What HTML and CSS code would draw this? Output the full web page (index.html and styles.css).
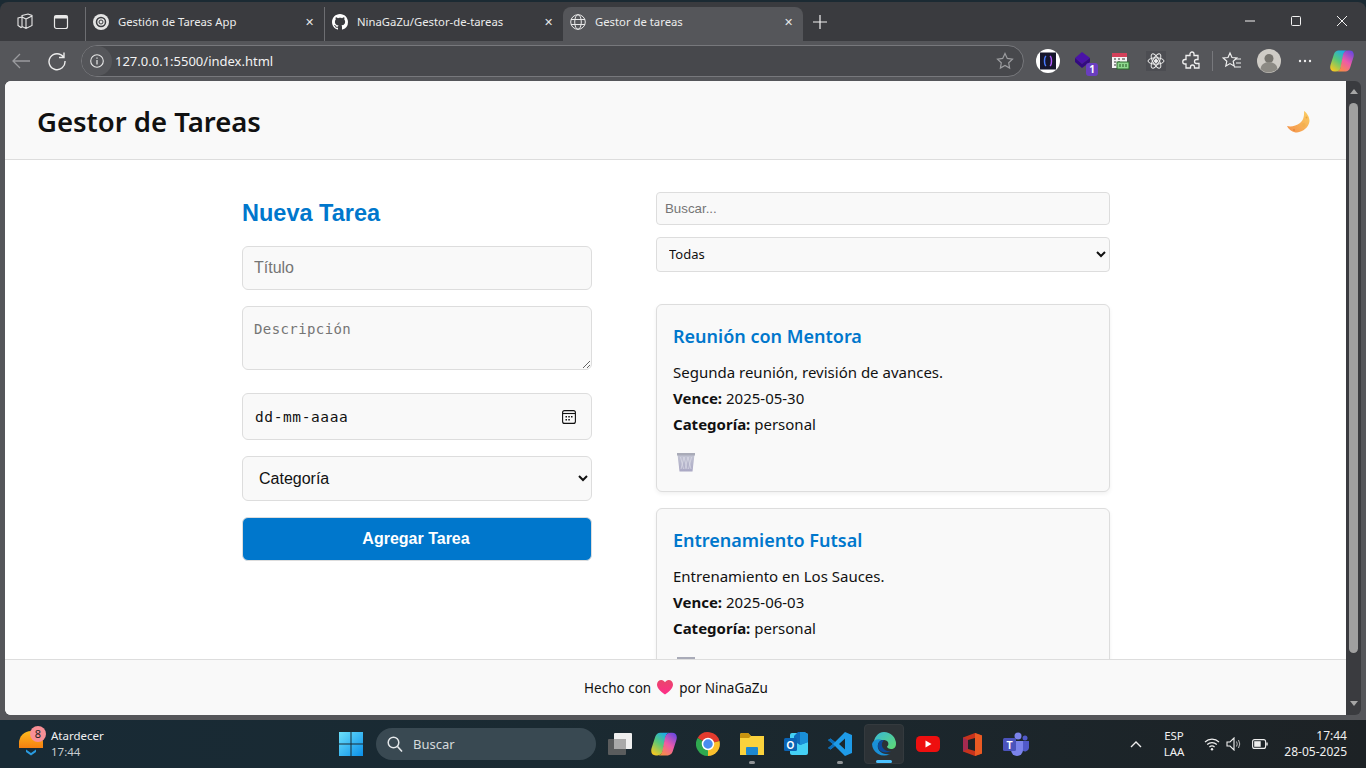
FILE: index.html
```html
<!DOCTYPE html>
<html lang="es">
<head>
<meta charset="utf-8">
<title>Gestor de tareas</title>
<link rel="stylesheet" href="styles.css">
</head>
<body>
<svg class="defs-holder" width="0" height="0"><defs>
  <linearGradient id="tg" x1="0" y1="0" x2="0" y2="1"><stop offset="0" stop-color="#c4c6d4"/><stop offset="1" stop-color="#aaa8c4"/></linearGradient>
  <g id="trashicon"><path d="M1.500 2.500h17l-2 17H3.500z" fill="url(#tg)"/><path d="M1 1h18v2.500H1z" fill="#a9abb8"/><path d="M4.500 5l3 12M8 5l3 12M12 5l3 12M15.500 5l-3 12M12 5L9 17M8 5L5 17" stroke="#dddde8" stroke-width=".7"/></g>
  <linearGradient id="cpa" x1="0.800" y1="0" x2="0.200" y2="1"><stop offset="0" stop-color="#18a8f0"/><stop offset=".5" stop-color="#58c878"/><stop offset="1" stop-color="#f8c820"/></linearGradient>
  <linearGradient id="cpb" x1="0.800" y1="0" x2="0.200" y2="1"><stop offset="0" stop-color="#f79040"/><stop offset=".5" stop-color="#ee5aa8"/><stop offset="1" stop-color="#6a48e0"/></linearGradient>
  <g id="copilot"><path d="M8.500 1.500H17c-2.500.5-3 2-3.500 4L11 18c-.6 3-2.500 4.500-5 4.500H4.500C1 22.500-.5 20 .5 16L4 5C4.800 2.700 6.500 1.500 8.500 1.500z" fill="url(#cpa)"/><path d="M8.500 1.500H17c-2.500.5-3 2-3.500 4L11 18c-.6 3-2.500 4.500-5 4.500H4.500C1 22.500-.5 20 .5 16L4 5C4.800 2.700 6.500 1.500 8.500 1.500z" transform="rotate(180 12 12)" fill="url(#cpb)"/></g>
</defs></svg>
<div class="browser">
  <div class="tabstrip">
    <div class="strip-icons">
      <svg class="ico" viewBox="0 0 18 18"><path d="M6 2.500l6-1.500 4 1.500v10l-6 3-4-2z M2 5l4-1v10l-1 .5-3-2z M10 6l6-3M10 6v9.500M6 4l4 2" fill="none" stroke="#e8e8e8" stroke-width="1.100"/></svg>
      <svg class="ico" viewBox="0 0 18 18"><rect x="2.500" y="2.500" width="13" height="13" rx="2" fill="none" stroke="#e8e8e8" stroke-width="1.200"/><rect x="2.500" y="2.500" width="13" height="3" fill="#e8e8e8"/></svg>
    </div>
    <div class="tab">
      <svg class="favicon" viewBox="0 0 16 16"><circle cx="8" cy="8" r="8" fill="#e4e4e4"/><circle cx="8" cy="8" r="4.500" fill="none" stroke="#3b3c40" stroke-width="1.500"/><circle cx="8" cy="8" r="2" fill="none" stroke="#3b3c40"/></svg>
      <span class="tab-title">Gestión de Tareas App</span><span class="tab-x">✕</span>
    </div>
    <div class="tab">
      <svg class="favicon" viewBox="0 0 16 16"><path fill="#fff" d="M8 0C3.580 0 0 3.580 0 8c0 3.540 2.290 6.530 5.470 7.590.4.070.55-.17.55-.38 0-.19-.01-.82-.01-1.490-2.010.37-2.530-.49-2.690-.94-.09-.23-.48-.94-.82-1.130-.28-.15-.68-.52-.01-.53.63-.01 1.080.58 1.230.82.72 1.210 1.870.87 2.330.66.07-.52.28-.87.51-1.070-1.780-.2-3.640-.89-3.640-3.950 0-.87.31-1.590.82-2.150-.08-.2-.36-1.020.08-2.120 0 0 .67-.21 2.200.82.64-.18 1.320-.27 2-.27s1.360.09 2 .27c1.530-1.040 2.200-.82 2.200-.82.44 1.100.16 1.920.08 2.120.51.56.82 1.270.82 2.150 0 3.070-1.870 3.750-3.650 3.950.29.25.54.73.54 1.480 0 1.070-.01 1.930-.01 2.200 0 .21.15.46.55.38A8.010 8.010 0 0 0 16 8c0-4.420-3.580-8-8-8z"/></svg>
      <span class="tab-title">NinaGaZu/Gestor-de-tareas</span><span class="tab-x">✕</span>
    </div>
    <div class="tab tab-active">
      <svg class="favicon" viewBox="0 0 16 16" fill="none" stroke="#e8e8e8"><circle cx="8" cy="8" r="7.300"/><ellipse cx="8" cy="8" rx="3.300" ry="7.300"/><path d="M1 5.500h14M1 10.500h14"/></svg>
      <span class="tab-title">Gestor de tareas</span><span class="tab-x">✕</span>
    </div>
    <svg class="newtab" viewBox="0 0 14 14"><path d="M7 0v14M0 7h14" stroke="#f2f2f2" stroke-width="1.200"/></svg>
    <div class="winctl">
      <svg viewBox="0 0 10 10"><path d="M0 5h10" stroke="#f2f2f2"/></svg>
      <svg viewBox="0 0 10 10"><rect x=".5" y=".5" width="9" height="9" rx="1" fill="none" stroke="#f2f2f2"/></svg>
      <svg viewBox="0 0 10 10"><path d="M0 0l10 10M10 0L0 10" stroke="#f2f2f2"/></svg>
    </div>
  </div>

  <div class="toolbar">
    <svg class="tb-nav" viewBox="0 0 20 20"><path d="M19 10H2M9 3l-7 7 7 7" fill="none" stroke="#9a9b9e" stroke-width="1.300"/></svg>
    <svg class="tb-nav" viewBox="0 0 20 20"><path d="M16.500 6A8 8 0 1 0 18 10M17 1.500V6.500h-5" fill="none" stroke="#ececec" stroke-width="1.400"/></svg>
    <div class="address">
      <span class="addr-info"><svg viewBox="0 0 14 14" width="14" height="14"><circle cx="7" cy="7" r="6.300" fill="none" stroke="#e8e8e8" stroke-width="1.100"/><path d="M7 6v4.500M7 3.500v1.300" stroke="#e8e8e8" stroke-width="1.200"/></svg></span>
      <span class="addr-url">127.0.0.1:5500/index.html</span>
      <svg class="addr-star" viewBox="0 0 18 18"><path d="M9 1.500l2.300 4.900 5.200.7-3.800 3.700.9 5.300L9 13.500l-4.600 2.600.9-5.300L1.500 7.100l5.200-.7z" fill="none" stroke="#9c9da0" stroke-width="1.200"/></svg>
    </div>
    <div class="extensions">
      <span class="ext"><svg viewBox="0 0 24 24" width="24" height="24"><circle cx="12" cy="12" r="12" fill="#fff"/><rect x="4" y="3.500" width="16" height="17" fill="#16162c"/><path d="M10 7q-1.500 1-1.500 5t1.500 5" fill="none" stroke="#4a7cff" stroke-width="1.400"/><path d="M14 7q1.500 1 1.500 5t-1.500 5" fill="none" stroke="#b05cff" stroke-width="1.400"/></svg></span>
      <span class="ext ext-badged"><svg viewBox="0 0 24 24" width="24" height="24"><path d="M10 3l8 6-8 6-7-6z" fill="#4a12a8"/><path d="M3 9l7 6 8-6v4l-8 6-7-6z" fill="#330a80"/></svg><b class="badge">1</b></span>
      <span class="ext"><svg viewBox="0 0 20 20" width="20" height="20"><rect x="2" y="2" width="15" height="15" fill="#f4f4f4"/><rect x="2" y="2" width="15" height="4" fill="#d3405a"/><path d="M4 8h2M4 11h2M4 14h2M8 8h2M8 11h2M12 8h3" stroke="#333"/><rect x="7" y="11" width="12" height="7" fill="#8fd98f" stroke="#2a6a2a"/><path d="M10 13v3M13 13v3M16 13v3" stroke="#225522"/></svg></span>
      <span class="ext"><svg viewBox="0 0 20 20" width="20" height="20" fill="none" stroke="#eee"><rect width="20" height="20" fill="#4c4d52" stroke="none"/><ellipse cx="10" cy="10" rx="8" ry="3.200"/><ellipse cx="10" cy="10" rx="8" ry="3.200" transform="rotate(60 10 10)"/><ellipse cx="10" cy="10" rx="8" ry="3.200" transform="rotate(120 10 10)"/><circle cx="10" cy="10" r="1.500" fill="#eee"/></svg></span>
      <span class="ext"><svg viewBox="0 0 20 20" width="20" height="20"><path d="M8 3a2 2 0 0 1 4 0v1.500h4v4h-1.500a2 2 0 0 0 0 4H17v4.500h-4.500v-1a2 2 0 0 0-4 0v1H4v-4H3a2 2 0 0 1 0-4.500h1V4.500h4z" fill="none" stroke="#efefef" stroke-width="1.300"/></svg></span>
      <span class="tb-sep"></span>
      <span class="ext ext-fav"><svg viewBox="0 0 20 20" width="20" height="20"><path d="M8 2l2 4.500 4.800.5-3.600 3.300 1 4.700L8 12.600 3.800 15l1-4.700L1.200 7 6 6.500z" fill="none" stroke="#efefef" stroke-width="1.200"/><path d="M13 8h6M14 12h5M12 16h7" stroke="#efefef" stroke-width="1.200"/></svg></span>
      <span class="ext"><svg viewBox="0 0 24 24" width="24" height="24"><circle cx="12" cy="12" r="12" fill="#cfccc6"/><circle cx="12" cy="9.500" r="4.500" fill="#77756f"/><path d="M3.500 20a8.500 7 0 0 1 17 0 12 12 0 0 1-17 0z" fill="#8c8a84"/></svg></span>
      <span class="ext"><svg viewBox="0 0 14 4" width="14" height="4" fill="#eee"><circle cx="2" cy="2" r="1.200"/><circle cx="7" cy="2" r="1.200"/><circle cx="12" cy="2" r="1.200"/></svg></span>
      <span class="ext ext-last"><svg viewBox="0 0 24 24" width="24" height="24"><use href="#copilot"/></svg></span>
    </div>
  </div>

  <div class="viewport">
    <div class="page">
      <header class="app-header">
        <h1 class="app-title">Gestor de Tareas</h1>
        <svg class="moon" viewBox="0 0 24 24"><defs><linearGradient id="mn" x1="1" y1="0" x2="0" y2="1"><stop offset="0" stop-color="#fbd063"/><stop offset="1" stop-color="#f4904a"/></linearGradient></defs><path d="M18 1C18.500 6 17 11 14 13 10 16 5 17 1 16 3 20 7 22.500 11 22.500 17 22 23 17 23.500 11 23.500 7 21 3 18 1z" fill="url(#mn)"/><circle cx="17.500" cy="15" r="2" fill="#f3b04f"/><circle cx="8" cy="20" r="1.100" fill="#e8893c"/><circle cx="20.500" cy="7.500" r=".9" fill="#eba53f"/></svg>
      </header>
      <main class="app-main">
        <section class="form-col">
          <h2 class="form-title">Nueva Tarea</h2>
          <input class="field field-title" type="text" placeholder="Título">
          <textarea class="field field-desc" placeholder="Descripción"></textarea>
          <div class="field field-date"><span>dd-mm-aaaa</span>
            <svg class="cal" viewBox="0 0 14 14"><rect x=".6" y=".6" width="12.800" height="12.800" rx="2" fill="none" stroke="#111" stroke-width="1.100"/><path d="M1 3.500h12" stroke="#111" stroke-width="1.100"/><path d="M3.500 6h1.500v1.500H3.500zM6.300 6h1.500v1.500H6.300zM9 6h1.500v1.500H9zM3.500 9h1.500v1.500H3.500zM6.300 9h1.500v1.500H6.300z" fill="#111"/></svg>
          </div>
          <select class="field field-cat"><option>Categoría</option></select>
          <button class="add-btn">Agregar Tarea</button>
        </section>
        <section class="list-col">
          <input class="search" type="text" placeholder="Buscar...">
          <select class="filter"><option>Todas</option></select>
          <article class="card">
            <h3 class="card-title">Reunión con Mentora</h3>
            <p class="card-line">Segunda reunión, revisión de avances.</p>
            <p class="card-line"><strong>Vence:</strong> 2025-05-30</p>
            <p class="card-line"><strong>Categoría:</strong> personal</p>
            <svg class="trash" viewBox="0 0 20 20"><use href="#trashicon"/></svg>
          </article>
          <article class="card">
            <h3 class="card-title">Entrenamiento Futsal</h3>
            <p class="card-line">Entrenamiento en Los Sauces.</p>
            <p class="card-line"><strong>Vence:</strong> 2025-06-03</p>
            <p class="card-line"><strong>Categoría:</strong> personal</p>
            <svg class="trash" viewBox="0 0 20 20"><use href="#trashicon"/></svg>
          </article>
        </section>
      </main>
      <footer class="app-footer">Hecho con <svg class="heart" viewBox="0 0 16 15"><defs><linearGradient id="ht" x1="0" y1="0" x2="0" y2="1"><stop offset="0" stop-color="#e8476a"/><stop offset="1" stop-color="#ff2d8a"/></linearGradient></defs><path d="M8 14.500C3 11 0 8 0 4.500 0 2 2 0 4.300 0 6 0 7.300 1 8 2.300 8.700 1 10 0 11.700 0 14 0 16 2 16 4.500 16 8 13 11 8 14.500z" fill="url(#ht)"/></svg> por NinaGaZu</footer>
    </div>
    <div class="scrollbar">
      <svg class="sb-arrow" viewBox="0 0 8 5"><path d="M4 0l4 5H0z" fill="#a6a6a6"/></svg>
      <div class="sb-thumb"></div>
      <svg class="sb-arrow" viewBox="0 0 8 5"><path d="M4 5L8 0H0z" fill="#a6a6a6"/></svg>
    </div>
  </div>
</div>

<div class="taskbar">
  <div class="tb-weather">
    <span class="wx-icon">
      <svg viewBox="0 0 28 28" width="28" height="28"><defs><linearGradient id="sun" x1="0" y1="0" x2="0" y2="1"><stop offset="0" stop-color="#fdbb1e"/><stop offset="1" stop-color="#f57f10"/></linearGradient></defs><path d="M1 13a12 12 0 0 1 24 0v5H1z" fill="url(#sun)"/><path d="M8 19.500l5 3.500 5-3.500v2.500l-5 3.500-5-3.500z" fill="#2a9be0"/></svg>
      <b class="wx-badge">8</b>
    </span>
    <span class="wx-text"><span class="wx-name">Atardecer</span><span class="wx-time">17:44</span></span>
  </div>
  <div class="tb-center">
    <span class="slot"><svg viewBox="0 0 24 24" width="24" height="24"><defs><linearGradient id="win" x1="0" y1="0" x2="1" y2="1"><stop offset="0" stop-color="#6ce0fb"/><stop offset="1" stop-color="#0a8fe8"/></linearGradient></defs><path d="M0 0h11.500v11.500H0zM12.500 0H24v11.500H12.500zM0 12.500h11.500V24H0zM12.500 12.500H24V24H12.500z" fill="url(#win)"/></svg></span>
    <div class="tb-search"><svg viewBox="0 0 16 16" width="16" height="16"><circle cx="6.500" cy="6.500" r="5.300" fill="none" stroke="#e4e8ea" stroke-width="1.500"/><path d="M10.500 10.500l4.500 5" stroke="#e4e8ea" stroke-width="1.600"/></svg><span>Buscar</span></div>
    <span class="slot"><svg viewBox="0 0 24 22" width="24" height="22"><rect y="6" width="18" height="16" rx="1" fill="#5a5c5d"/><rect x="6" width="18" height="16" rx="1" fill="#efefef"/><rect x="6" y="6" width="12" height="10" fill="#a9a9a9"/></svg></span>
    <span class="slot"><svg viewBox="0 0 24 24" width="26" height="26"><use href="#copilot"/></svg></span>
    <span class="slot"><svg viewBox="0 0 24 24" width="24" height="24"><path d="M12 12L1.600 6A12 12 0 0 1 23.500 9z" fill="#e33b2e"/><path d="M12 12L23.500 9A12 12 0 0 1 12 24z" fill="#fbc02d"/><path d="M12 12L12 24A12 12 0 0 1 1.600 6z" fill="#2fa84f"/><circle cx="12" cy="12" r="5.500" fill="#4a8df0" stroke="#fff" stroke-width="1.500"/></svg></span>
    <span class="slot slot-open"><svg viewBox="0 0 24 22" width="24" height="22"><path d="M0 2q0-2 2-2h6l3 3h13v19H0z" fill="#fbd23c"/><path d="M0 2q0-2 2-2h6l3 3-2 2H0z" fill="#c8930f"/><rect x="6" y="14" width="12" height="8" rx="1" fill="#1e88d0"/></svg></span>
    <span class="slot"><svg viewBox="0 0 24 24" width="24" height="24"><rect x="6" y="1" width="18" height="22" rx="2" fill="#44d0f5"/><path d="M14 0h7l3 3v7l-8 3-6-4V4z" fill="#0f6cbd"/><path d="M16 0h5l3 3v7l-8 3z" fill="#1a8fd8"/><rect x="0" y="6" width="13" height="13" rx="1.500" fill="#0a63b4"/><text class="ol-mark" x="6.500" y="16.500">O</text></svg></span>
    <span class="slot slot-open"><svg viewBox="0 0 24 24" width="24" height="24"><path d="M17 0l7 3v18l-7 3L7 14l-4.500 3.500L0 16l5-4-5-4 2.500-1.500L7 10zM17 6.500L11 12l6 5.500z" fill="#1e9be8"/><path d="M0 8l2.500-1.500L7 10l-2 2zM0 16l2.500 1.500L7 14l-2-2z" fill="#0a6cb8"/></svg></span>
    <span class="slot slot-active"><svg viewBox="0 0 24 24" width="24" height="24"><defs><linearGradient id="edg" x1="0" y1="0" x2="1" y2="1"><stop offset="0" stop-color="#38b8d8"/><stop offset="1" stop-color="#60da70"/></linearGradient></defs><path d="M12 0a12 12 0 0 1 12 12c0 3-2 5-5 5-2 0-4-1-4-2.500 2-1 2-5-1-6C9 7 4 9 2 13 1 6 6 0 12 0z" fill="url(#edg)"/><path d="M0 12c1-4 6-6 10-4-3 1-5 4-4 8 1 4 6 7 12 6a12 12 0 0 1-18-10z" fill="#1a90d8"/><path d="M6 14c0-4 3-6 6-6-2 2-3 5-1 8 1.500 2.500 4 3.500 8 3-5 3-13 1-13-5z" fill="#0b4a9c"/></svg></span>
    <span class="slot"><svg viewBox="0 0 24 16" width="24" height="16"><rect width="24" height="16" rx="4.500" fill="#ee0f0f"/><path d="M9.500 4.500l6 3.500-6 3.500z" fill="#fff"/></svg></span>
    <span class="slot"><svg viewBox="0 0 19 23" width="19" height="23"><path d="M0 4.500L12 0l7 2.500v18L12 23 0 18.500z" fill="#c8331c"/><path d="M12 0l7 2.500v18L12 23z" fill="#ea5a23"/><path d="M5 7l7-2v13l-7-2z" fill="#1d2327"/><path d="M0 4.500L5 7v9l-5 2.500z" fill="#a42a50"/></svg></span>
    <span class="slot"><svg viewBox="0 0 26 24" width="26" height="24"><circle cx="15" cy="4" r="3.500" fill="#7b83eb"/><circle cx="22" cy="6" r="2.500" fill="#5059c9"/><path d="M18 9h8v7a4 4 0 0 1-7 2z" fill="#5059c9"/><path d="M8 9h12v9a6 6 0 0 1-12 0z" fill="#7b83eb"/><rect x="0" y="6" width="13" height="13" rx="1.500" fill="#4b53bc"/><text class="ol-mark" x="6.500" y="16.500">T</text></svg></span>
  </div>
  <div class="tb-tray">
    <svg class="tray-chev" viewBox="0 0 12 7"><path d="M1 6l5-5 5 5" fill="none" stroke="#eee" stroke-width="1.400"/></svg>
    <span class="tray-lang"><span>ESP</span><span>LAA</span></span>
    <svg class="tray-ico" viewBox="0 0 16 14"><path d="M1 5a10 10 0 0 1 14 0M3.200 7.500a7 7 0 0 1 9.600 0M5.400 10a4 4 0 0 1 5.200 0" fill="none" stroke="#eee" stroke-width="1.200"/><circle cx="8" cy="12.300" r="1.200" fill="#eee"/></svg>
    <svg class="tray-ico" viewBox="0 0 16 14"><path d="M1 5h3l4-4v12L4 9H1z" fill="none" stroke="#eee" stroke-width="1.100"/><path d="M10.500 4.500q1.500 2.500 0 5M12.500 3q2.500 4 0 8" fill="none" stroke="#bbb"/></svg>
    <svg class="tray-bat" viewBox="0 0 16 10"><rect x=".6" y=".6" width="13" height="8.800" rx="2" fill="none" stroke="#eee" stroke-width="1.100"/><rect x="2.200" y="2.200" width="6.500" height="5.600" fill="#eee"/><path d="M15 3.500v3" stroke="#eee" stroke-width="1.400"/></svg>
    <span class="tray-clock"><span>17:44</span><span>28-05-2025</span></span>
  </div>
</div>
</body>
</html>
```
FILE: styles.css
```css
* { box-sizing: border-box; }
html, body { margin: 0; height: 100%; overflow: hidden; }
body {
  display: flex;
  flex-direction: column;
  width: 1366px;
  height: 768px;
  background: #1b2a33;
  font-family: "Noto Sans", "Open Sans", sans-serif;
}
.defs-holder { display: block; height: 0; flex: none; }

.browser {
  flex: none;
  height: 720px;
  overflow: hidden;
  display: flex;
  flex-direction: column;
  padding-top: 2px;
}
.tabstrip {
  height: 39px;
  flex: none;
  background: #3a3b3f;
  border-radius: 8px 8px 0 0;
  display: flex;
  align-items: flex-end;
  color: #ececec;
  font-size: 11.300px;
}
.strip-icons {
  display: flex;
  width: 85px;
  height: 34px;
  padding: 0 0 5px 16px;
  gap: 18px;
  align-items: center;
}
.ico { width: 18px; height: 18px; }
.tab {
  width: 239px;
  height: 34px;
  display: flex;
  align-items: center;
  padding: 0 0 5px 7px;
  border-left: 1px solid #6d6e72;
  background-clip: padding-box;
}
.tab-active {
  width: 240px;
  background: #55565a;
  border-left: 0;
  border-radius: 8px 8px 0 0;
}
.favicon { width: 16px; height: 16px; margin-right: 9px; flex: none; }
.tab-title { flex: 1; white-space: nowrap; }
.tab-x { width: 30px; text-align: center; font-size: 11px; color: #e6e6e6; }
.newtab { width: 14px; height: 14px; margin: 0 0 12px 10px; }
.winctl {
  margin-left: auto;
  display: flex;
  height: 39px;
  align-items: flex-start;
  padding: 14px 19px 0 0;
  gap: 36px;
}
.winctl svg { width: 10px; height: 10px; }

.toolbar {
  height: 40px;
  flex: none;
  background: #55565a;
  display: flex;
  align-items: center;
  padding: 0 0 0 11px;
}
.tb-nav { width: 20px; height: 20px; margin-right: 16px; flex: none; }
.tb-nav + .address { margin-left: -2px; }
.address {
  width: 943px;
  height: 32px;
  flex: none;
  border: 1px solid #77787c;
  border-radius: 16px;
  background: #47484c;
  display: flex;
  align-items: center;
  font-size: 13px;
  color: #f2f2f2;
}
.addr-info {
  width: 30px;
  height: 30px;
  border-radius: 50%;
  background: #55565a;
  display: flex;
  align-items: center;
  justify-content: center;
  flex: none;
}
.addr-url { margin-left: 3px; flex: 1; }
.addr-star { width: 18px; height: 18px; margin-right: 9px; }
.extensions { display: flex; align-items: center; margin-left: 6px; }
.ext {
  position: relative;
  width: 36px;
  height: 32px;
  display: flex;
  align-items: center;
  justify-content: center;
}
.ext-last { margin-left: 1px; }
.badge {
  position: absolute;
  left: 20px;
  top: 18px;
  width: 12px;
  height: 13px;
  border-radius: 3px;
  background: #6a3ec0;
  color: #fff;
  font-size: 10px;
  line-height: 13px;
  text-align: center;
}
.tb-sep { width: 1px; height: 20px; background: #77787c; margin: 0 0 0 2px; }
.ext-fav { width: 38px; }

.viewport {
  flex: 1;
  display: flex;
  min-height: 0;
  background: #55565a;
  padding: 0 5px 5px;
}
.page {
  flex: 1;
  min-width: 0;
  min-height: 0;
  display: flex;
  flex-direction: column;
  background: #fff;
  border-radius: 6px 0 0 6px;
  overflow: hidden;
  color: #111;
}
.app-header {
  height: 79px;
  flex: none;
  display: flex;
  align-items: center;
  justify-content: space-between;
  padding: 3px 37px 0 32px;
  background: #f9f9f9;
  border-bottom: 1px solid #ddd;
}
.app-title { margin: 0; font-size: 27.500px; font-weight: 600; color: #111; }
.moon { width: 24px; height: 24px; margin-top: 1px; }

.app-main {
  flex: 1;
  min-height: 0;
  overflow: hidden;
  display: flex;
  align-items: flex-start;
  justify-content: center;
  gap: 64px;
  padding-top: 32px;
}
.form-col {
  width: 350px;
  flex: none;
  display: flex;
  flex-direction: column;
  align-items: stretch;
}
.form-title {
  margin: 7px 0 19px;
  font: bold 23.500px/28px "Liberation Sans", Arial, sans-serif;
  color: #0077cc;
}
.field {
  width: 100%;
  background: #f9f9f9;
  border: 1px solid #ddd;
  border-radius: 6px;
  color: #111;
  margin-bottom: 16px;
}
.field-title {
  height: 44px;
  padding: 0 11px;
  font: 16px "Liberation Sans", Arial, sans-serif;
}
.field-desc {
  height: 64px;
  padding: 14px 11px;
  margin-bottom: 23px;
  font: 14px/1.200 "DejaVu Sans Mono", monospace;
  letter-spacing: .4px;
  display: block;
}
.field-date {
  height: 47px;
  padding: 0 15px 0 12px;
  display: flex;
  align-items: center;
  justify-content: space-between;
  font: 14.500px "DejaVu Sans Mono", monospace;
  letter-spacing: .6px;
}
.cal { width: 14px; height: 14px; }
.field-cat {
  height: 45px;
  padding: 0 12px;
  font: 16px "Liberation Sans", Arial, sans-serif;
}
.add-btn {
  height: 44px;
  background: #0077cc;
  color: #fff;
  border: 1px solid #ddd;
  border-radius: 6px;
  padding: 0 8px 0 6px;
  font: bold 16px "Liberation Sans", Arial, sans-serif;
}
.field::placeholder, .search::placeholder { color: #757575; }

.list-col {
  width: 454px;
  flex: none;
  display: flex;
  flex-direction: column;
}
.search {
  height: 33px;
  flex: none;
  background: #f9f9f9;
  border: 1px solid #ddd;
  border-radius: 4px;
  padding: 0 8px;
  font: 13.300px "Liberation Sans", Arial, sans-serif;
  margin-bottom: 12px;
}
.filter {
  height: 35px;
  flex: none;
  background: #f9f9f9;
  border: 1px solid #ddd;
  border-radius: 4px;
  padding: 0 8px 2px;
  font: 13px "Noto Sans", sans-serif;
  color: #111;
  margin-bottom: 32px;
}
.card {
  flex: none;
  height: 188px;
  background: #f9f9f9;
  border: 1px solid #ddd;
  border-radius: 6px;
  padding: 16px;
  margin-bottom: 16px;
  box-shadow: 0 2px 4px rgba(0, 0, 0, .06);
}
.card-title {
  margin: 2px 0 11px;
  font-size: 18px;
  line-height: 26px;
  font-weight: 600;
  color: #0077cc;
}
.card-line { margin: 0; font-size: 15px; line-height: 25.800px; color: #111; }
.card-line strong { font-weight: 700; }
.trash { display: block; width: 20px; height: 20px; margin: 15px 0 0 3px; }

.app-footer {
  height: 56px;
  flex: none;
  background: #f9f9f9;
  border-top: 1px solid #ddd;
  display: flex;
  align-items: center;
  justify-content: center;
  gap: 6px;
  font-size: 13.500px;
  color: #111;
}
.heart { width: 16px; height: 15px; }

.scrollbar {
  width: 15px;
  flex: none;
  background: #3a3b3f;
  display: flex;
  flex-direction: column;
  align-items: center;
  padding: 8px 0 9px;
  border-radius: 0 6px 6px 0;
  margin-left: -1px;
}
.sb-arrow { width: 8px; height: 5px; flex: none; }
.sb-thumb { width: 9px; height: 550px; margin: 9px 0 auto; border-radius: 5px; background: #a0a0a0; }

.taskbar {
  flex: 1;
  min-height: 0;
  display: flex;
  align-items: center;
  background: linear-gradient(90deg, #182a35 0%, #1a2a32 40%, #1d2225 100%);
  color: #f0f0f0;
  font-size: 12px;
}
.tb-weather { width: 329px; flex: none; display: flex; align-items: center; padding-left: 18px; gap: 5px; }
.wx-icon { position: relative; width: 28px; height: 28px; display: block; }
.wx-badge {
  position: absolute;
  right: 0;
  top: -4px;
  width: 16px;
  height: 16px;
  border-radius: 50%;
  background: #f78f96;
  color: #222;
  font-size: 11px;
  font-weight: 400;
  line-height: 16px;
  text-align: center;
}
.wx-text { display: flex; flex-direction: column; line-height: 16px; font-size: 11.500px; }
.wx-time { color: #c8cdd0; }
.tb-center { display: flex; align-items: center; }
.slot {
  position: relative;
  width: 44px;
  height: 40px;
  display: flex;
  align-items: center;
  justify-content: center;
}
.slot-active { background: #2c3236; border: 1px solid #343a3e; border-radius: 4px; width: 40px; margin: 0 2px; }
.slot-active::after, .slot-open::after {
  content: "";
  position: absolute;
  bottom: 0;
  left: 50%;
  transform: translateX(-50%);
  height: 3px;
  border-radius: 2px;
}
.slot-active::after { width: 16px; background: #4cc2ff; }
.slot-open::after { width: 6px; background: #8f9396; }
.ol-mark { fill: #fff; font: bold 10px "Liberation Sans", sans-serif; text-anchor: middle; }
.tb-search {
  width: 220px;
  height: 32px;
  margin: 0 2px 0 3px;
  border-radius: 16px;
  background: #394952;
  display: flex;
  align-items: center;
  gap: 10px;
  padding-left: 11px;
  color: #d5dadc;
  font-size: 13px;
}
.tb-tray { margin-left: auto; display: flex; align-items: center; padding-right: 19px; }
.tray-chev { width: 12px; height: 7px; margin-right: 17px; }
.tray-lang { display: flex; flex-direction: column; align-items: center; width: 30px; line-height: 16px; font-size: 11.500px; margin-right: 15px; }
.tray-ico { width: 16px; height: 14px; margin-right: 6px; }
.tray-bat { width: 16px; height: 10px; margin: 0 0 0 4px; }
.tray-clock { display: flex; flex-direction: column; align-items: flex-end; width: 79px; line-height: 16px; font-size: 12px; }
```
